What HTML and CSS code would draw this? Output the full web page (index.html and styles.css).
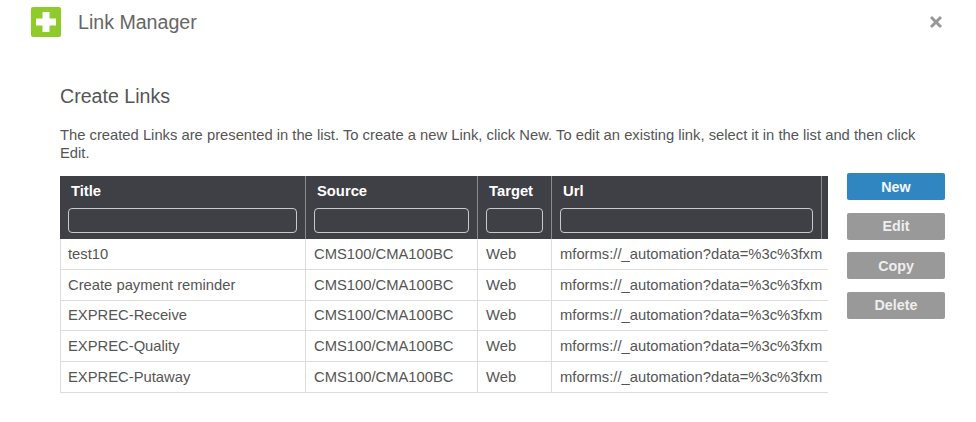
FILE: index.html
```html
<!DOCTYPE html>
<html lang="en">
<head>
    <meta charset="UTF-8">
    <title>Link Manager</title>
    <link rel="stylesheet" href="styles.css">
</head>
<body>
    <div class="dialog-header">
        <div class="app-icon">
            <svg width="30" height="30" viewBox="0 0 30 30">
                <rect width="30" height="30" rx="2" fill="#8fcb2a"/>
                <path d="M11.500 5h7v6.500H25v7h-6.500V25h-7v-6.500H5v-7h6.500z" fill="#fff"/>
            </svg>
        </div>
        <h1 class="dialog-title">Link Manager</h1>
        <svg class="close-icon" width="14" height="14" viewBox="0 0 14 14">
            <path d="M2 2l10 10M12 2L2 12" stroke="#999" stroke-width="3" fill="none"/>
        </svg>
    </div>

    <div class="content">
        <h2 class="section-title">Create Links</h2>
        <p class="hint">The created Links are presented in the list. To create a new Link, click New. To edit an existing link, select it in the list and then click Edit.</p>

        <div class="list-row">
            <div class="table-wrap">
                <table class="links">
                    <colgroup>
                        <col class="col-title">
                        <col class="col-source">
                        <col class="col-target">
                        <col class="col-url">
                        <col class="col-rest">
                    </colgroup>
                    <thead>
                        <tr>
                            <th><span>Title</span><input type="text"></th>
                            <th><span>Source</span><input type="text"></th>
                            <th><span>Target</span><input type="text"></th>
                            <th><span>Url</span><input type="text"></th>
                            <th></th>
                        </tr>
                    </thead>
                    <tbody>
                        <tr><td>test10</td><td>CMS100/CMA100BC</td><td>Web</td><td>mforms://_automation?data=%3c%3fxm</td><td></td></tr>
                        <tr><td>Create payment reminder</td><td>CMS100/CMA100BC</td><td>Web</td><td>mforms://_automation?data=%3c%3fxm</td><td></td></tr>
                        <tr><td>EXPREC-Receive</td><td>CMS100/CMA100BC</td><td>Web</td><td>mforms://_automation?data=%3c%3fxm</td><td></td></tr>
                        <tr><td>EXPREC-Quality</td><td>CMS100/CMA100BC</td><td>Web</td><td>mforms://_automation?data=%3c%3fxm</td><td></td></tr>
                        <tr><td>EXPREC-Putaway</td><td>CMS100/CMA100BC</td><td>Web</td><td>mforms://_automation?data=%3c%3fxm</td><td></td></tr>
                    </tbody>
                </table>
            </div>
            <div class="actions">
                <button class="btn btn-primary">New</button>
                <button class="btn">Edit</button>
                <button class="btn">Copy</button>
                <button class="btn">Delete</button>
            </div>
        </div>
    </div>
</body>
</html>
```

FILE: styles.css
```css
html, body {
    margin: 0;
    height: 100%;
    overflow: hidden;
}

body {
    background-color: #fff;
    font-family: "Liberation Sans", Arial, sans-serif;
    color: #555;
}

.dialog-header {
    display: flex;
    align-items: center;
    height: 30px;
    padding: 7px 33px 0 31px;
}

.app-icon {
    width: 30px;
    height: 30px;
    margin-right: 17px;
}

.app-icon svg {
    display: block;
}

.dialog-title {
    flex: 1;
    margin: 0;
    font-size: 19.600px;
    font-weight: 400;
    color: #666;
}

.close-icon {
    display: block;
}

.content {
    padding: 47px 31px 0 60px;
}

.section-title {
    margin: 0;
    font-size: 19.600px;
    line-height: 24px;
    font-weight: 400;
    color: #555;
}

.hint {
    max-width: 865px;
    margin: 18px 0 0;
    font-size: 14.770px;
    line-height: 18px;
    color: #555;
}

.list-row {
    display: flex;
    align-items: flex-start;
    gap: 19px;
    margin-top: 14px;
}

.table-wrap {
    width: 768px;
    overflow: hidden;
    flex: none;
}

.links {
    width: 768px;
    table-layout: fixed;
    border-collapse: separate;
    border-spacing: 0;
    font-size: 14.770px;
}

.col-title { width: 246px; }
.col-source { width: 172px; }
.col-target { width: 74px; }
.col-url { width: 270px; }
.col-rest { width: 6px; }

.links th {
    height: 63px;
    padding: 0 8px;
    box-sizing: border-box;
    background-color: #3f4045;
    border-right: 1px solid #8a8b8e;
    color: #fff;
    font-weight: 700;
    text-align: left;
    vertical-align: top;
}

.links th:last-child,
.links td:last-child {
    border-right: 0;
    padding: 0;
}

.links th span {
    display: block;
    margin: 7px 0 9px 3px;
    line-height: 16px;
}

.links th input {
    display: block;
    width: 100%;
    height: 25px;
    box-sizing: border-box;
    padding: 0 4px;
    background: #3f4045;
    border: 1px solid #c9c9c9;
    border-radius: 4px;
}

.links td {
    height: 30.800px;
    padding: 0 0 0 8px;
    box-sizing: border-box;
    border-right: 1px solid #dcdcdc;
    border-bottom: 1px solid #dcdcdc;
    color: #555;
    white-space: nowrap;
    overflow: hidden;
}

.links td:first-child {
    padding-left: 7px;
    border-left: 1px solid #dcdcdc;
}

.links td:nth-child(4) {
    border-right: 0;
}

.actions {
    display: flex;
    flex-direction: column;
    gap: 12.500px;
    width: 98px;
    margin-top: -3px;
}

.btn {
    height: 27px;
    padding: 0;
    border: 0;
    border-radius: 2px;
    background-color: #999;
    color: #eee;
    font-family: inherit;
    font-size: 14.300px;
    font-weight: 700;
}

.btn-primary {
    background-color: #2f86c1;
    color: #f2f7fb;
}
```
